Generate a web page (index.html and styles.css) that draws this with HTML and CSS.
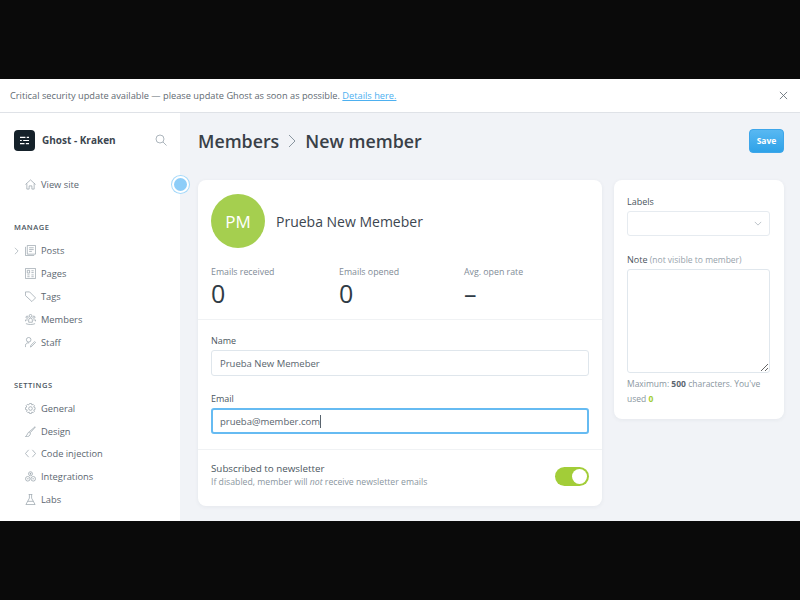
FILE: index.html
```html
<!DOCTYPE html>
<html lang="en">
<head>
    <meta charset="UTF-8">
    <title>New member - Ghost</title>
    <link rel="stylesheet" href="styles.css">
</head>
<body>
    <div class="app">
        <div class="banner">
            <span>Critical security update available — please update Ghost as soon as possible. <a href="#">Details here.</a></span>
            <svg class="close" viewBox="0 0 10 10"><path d="M1 1l8 8M9 1l-8 8"/></svg>
        </div>
        <div class="body">
            <nav class="sidebar">
                <div class="brand">
                    <div class="logo">
                        <svg viewBox="0 0 12 10"><path d="M1 1.500h6M8.500 1.500h2.500M1 5h2M4.500 5h6.500M1 8.500h5M7.500 8.500h3.500"/></svg>
                    </div>
                    <span class="brand-name">Ghost - Kraken</span>
                    <svg class="search" viewBox="0 0 12 12"><circle cx="5" cy="5" r="4"/><path d="M8 8l3.500 3.500"/></svg>
                </div>
                <a class="item view-site" href="#">
                    <svg viewBox="0 0 12 12"><path d="M.5 6L6 1l5.500 5M2 5v6h2.500V7.500h3V11H10V5"/></svg>View site
                </a>
                <div class="pulse"></div>

                <h4>Manage</h4>
                <a class="item" href="#">
                    <svg class="arrow" viewBox="0 0 6 10"><path d="M1 1l4 4-4 4"/></svg>
                    <svg viewBox="0 0 12 12"><path d="M2.500.5h9v9.500h-9zM.5 2v9.500h9.500M4.500 3h5M4.500 5h5M4.500 7h3"/></svg>Posts
                </a>
                <a class="item" href="#">
                    <svg viewBox="0 0 12 12"><path d="M.5.5h11v11H.5zM2.500 2.500h2.500v3H2.500zM7 3h2.500M7 5h2.500M2.500 7.500h2.500M2.500 9.500h2.500M7 7.500h2.500M7 9.500h2.500"/></svg>Pages
                </a>
                <a class="item" href="#">
                    <svg viewBox="0 0 12 12"><path d="M.5 1h4.500l6.500 6.500-4 4L.5 5zM3 3.500h.01"/></svg>Tags
                </a>
                <a class="item" href="#">
                    <svg viewBox="0 0 12 12"><circle cx="6" cy="2" r="1.500"/><circle cx="2.300" cy="3.500" r="1.200"/><circle cx="9.700" cy="3.500" r="1.200"/><path d="M4 6.500a2 2 0 0 1 4 0V9H4zM.5 8V6.500h2.500M11.500 8V6.500H9M1 10.500c3 1.300 7 1.300 10 0"/></svg>Members
                </a>
                <a class="item" href="#">
                    <svg viewBox="0 0 12 12"><circle cx="4" cy="3" r="2.500"/><path d="M.5 11V9a3 3 0 0 1 4-2.500M6 11l.5-2 4-4 1 1-4 4z"/></svg>Staff
                </a>

                <h4 class="settings">Settings</h4>
                <a class="item" href="#">
                    <svg viewBox="0 0 12 12"><circle cx="6" cy="6" r="2"/><path d="M5 .5h2l.4 1.600 1.500-.6 1.400 1.400-.8 1.500 1.500.6v2l-1.500.6.800 1.500-1.400 1.400-1.500-.6L7 11.500H5l-.4-1.600-1.500.6-1.400-1.400.8-1.500L.5 7V5l1.500-.6-.8-1.500 1.400-1.400 1.500.6z"/></svg>General
                </a>
                <a class="item" href="#">
                    <svg viewBox="0 0 12 12"><path d="M11 .8L5 6l1 1L11.300 1.200zM4.500 6.500c-1.800.3-1.500 3.500-4 5 3 .5 5.600-.6 5.300-3.800z"/></svg>Design
                </a>
                <a class="item" href="#">
                    <svg viewBox="0 0 12 12"><path d="M4 2L.5 6 4 10M8 2l3.500 4L8 10"/></svg>Code injection
                </a>
                <a class="item" href="#">
                    <svg viewBox="0 0 12 12"><circle cx="6" cy="3" r="2.200"/><circle cx="3" cy="8.500" r="2.500"/><circle cx="9" cy="8.500" r="2.500"/><path d="M5 3h2M6 2v2M2 8.500h2M8 8.500h2"/></svg>Integrations
                </a>
                <a class="item" href="#">
                    <svg viewBox="0 0 12 12"><path d="M4 .5h4M4.800.5v4L1 11.500h10L7.200 4.500v-4M3 8h6"/></svg>Labs
                </a>
            </nav>

            <main class="content">
                <header class="page-head">
                    <h1>Members <svg class="crumb" viewBox="0 0 8 14"><path d="M1 1l6 6-6 6"/></svg> New member</h1>
                    <button class="save">Save</button>
                </header>
                <div class="columns">
                    <section class="card member">
                        <div class="member-top">
                            <div class="profile">
                                <div class="avatar">PM</div>
                                <div class="member-name">Prueba New Memeber</div>
                            </div>
                            <div class="stats">
                                <div class="stat stat-received"><span>Emails received</span><strong>0</strong></div>
                                <div class="stat stat-opened"><span>Emails opened</span><strong>0</strong></div>
                                <div class="stat"><span>Avg. open rate</span><strong>–</strong></div>
                            </div>
                        </div>
                        <div class="member-form">
                            <label for="name">Name</label>
                            <input id="name" class="field" type="text" value="Prueba New Memeber">
                            <label for="email" class="email-label">Email</label>
                            <div class="field field-focus">prueba@member.com<i class="caret"></i></div>
                        </div>
                        <div class="newsletter">
                            <div>
                                <div class="news-title">Subscribed to newsletter</div>
                                <div class="news-hint">If disabled, member will <em>not</em> receive newsletter emails</div>
                            </div>
                            <div class="toggle"><i></i></div>
                        </div>
                    </section>

                    <aside class="card side">
                        <label>Labels</label>
                        <div class="select">
                            <svg viewBox="0 0 10 6"><path d="M1 1l4 4 4-4"/></svg>
                        </div>
                        <label class="note-label">Note <span>(not visible to member)</span></label>
                        <textarea class="note"></textarea>
                        <p class="count">Maximum: <b>500</b> characters. You've used <b class="used">0</b></p>
                    </aside>
                </div>
            </main>
        </div>
    </div>
</body>
</html>
```

FILE: styles.css
```css
html, body {
    margin: 0;
    height: 100%;
    background-color: #0a0a0a;
}
body {
    padding-top: 79px;
    box-sizing: border-box;
    font-family: "Open Sans", "Noto Sans", sans-serif;
    color: #3c4650;
}
svg {
    fill: none;
    stroke: #8a96a0;
    stroke-width: 0.7;
}
a {
    text-decoration: none;
}

.app {
    height: 442px;
    background-color: #f1f3f7;
    overflow: hidden;
}

.banner {
    height: 33px;
    padding: 0 12px 0 10px;
    background-color: #fff;
    border-bottom: 1px solid #dfe2e7;
    display: flex;
    align-items: center;
    justify-content: space-between;
    font-size: 9.250px;
    color: #5f6a72;
}
.banner a {
    color: #4db0f0;
    text-decoration: underline;
}
.close {
    width: 9px;
    height: 9px;
    stroke: #6a747c;
    stroke-width: 1;
}

.body {
    display: flex;
    height: 408px;
}

.sidebar {
    width: 180px;
    flex-shrink: 0;
    background-color: #fff;
    padding: 16px 0 0 14px;
    box-sizing: border-box;
    position: relative;
}
.brand {
    display: flex;
    align-items: center;
    height: 22px;
    padding-right: 13px;
    margin-bottom: 22px;
}
.logo {
    width: 21px;
    height: 21px;
    border-radius: 4px;
    background-color: #15212a;
    display: flex;
    align-items: center;
    justify-content: center;
    margin-right: 7px;
}
.logo svg {
    width: 11px;
    height: 9px;
    stroke: #fff;
    stroke-width: 1.300;
}
.brand-name {
    flex: 1;
    font-size: 10px;
    font-weight: 700;
    color: #3c4650;
}
.search {
    width: 12px;
    height: 12px;
}

.item {
    position: relative;
    display: flex;
    align-items: center;
    height: 23px;
    padding-left: 11px;
    font-size: 9.300px;
    color: #5b6670;
}
.settings ~ .item {
    height: 22.600px;
}
.item svg {
    width: 11px;
    height: 11px;
    margin-right: 5px;
    flex-shrink: 0;
}
.item .arrow {
    position: absolute;
    left: 0;
    width: 5px;
    height: 8px;
}
.view-site {
    margin-bottom: 25px;
}
.pulse {
    position: absolute;
    left: 172px;
    top: 63px;
    width: 13px;
    height: 13px;
    border-radius: 50%;
    background-color: #8dcdf8;
    border: 2px solid #fff;
    box-shadow: 0 0 0 1px #a5d9fa;
}
.sidebar h4 {
    margin: 0 0 6px;
    font-size: 7.500px;
    font-weight: 600;
    letter-spacing: 0.5px;
    text-transform: uppercase;
    line-height: 12px;
    color: #4b5660;
}
.sidebar .settings {
    margin-top: 25px;
    margin-bottom: 6.500px;
}

.content {
    flex: 1;
    padding: 0 16px 0 18px;
}
.page-head {
    display: flex;
    align-items: center;
    justify-content: space-between;
    height: 55px;
    padding-bottom: 12px;
}
.page-head h1 {
    margin: 0;
    font-size: 17.800px;
    font-weight: 600;
    color: #394047;
    display: flex;
    align-items: center;
    gap: 9px;
}
.crumb {
    width: 8px;
    height: 14px;
    stroke-width: 1;
}
.save {
    width: 35px;
    height: 24px;
    padding: 0;
    border: 1px solid #3ea6ea;
    border-radius: 4px;
    background-color: #3ba9ec;
    background-image: linear-gradient(#58b8f2, #2ea2e8);
    color: #fff;
    font-family: inherit;
    font-size: 8.500px;
    font-weight: 700;
}

.columns {
    display: flex;
    align-items: flex-start;
    gap: 12px;
}
.card {
    background-color: #fff;
    border-radius: 8px;
    box-shadow: 0 1px 4px rgba(40, 50, 70, 0.06);
    box-sizing: border-box;
}
.member {
    width: 404px;
}
.member-top {
    padding: 14px 13px 11px 13px;
    border-bottom: 1px solid #f0f2f4;
}
.profile {
    display: flex;
    align-items: center;
    gap: 11px;
    margin-bottom: 18px;
}
.avatar {
    width: 54px;
    height: 54px;
    border-radius: 50%;
    background-color: #a5cf4f;
    color: #fff;
    font-size: 17px;
    display: flex;
    align-items: center;
    justify-content: center;
}
.member-name {
    font-size: 14px;
    font-weight: 500;
    color: #3c4650;
}
.stats {
    display: flex;
}
.stat {
    display: flex;
    flex-direction: column;
    font-size: 8.800px;
    color: #7f8c97;
}
.stat-received {
    width: 128px;
}
.stat-opened {
    width: 125px;
}
.stat strong {
    font-size: 25px;
    font-weight: 400;
    color: #2f3b45;
    line-height: 30px;
}

.member-form {
    padding: 15px 13px 15px;
    border-bottom: 1px solid #f0f2f4;
}
label {
    display: block;
    font-size: 9px;
    font-weight: 500;
    color: #4b5660;
    line-height: 12px;
    margin-bottom: 3px;
}
.field {
    display: flex;
    align-items: center;
    width: 100%;
    height: 26px;
    padding: 0 8px;
    box-sizing: border-box;
    border: 1px solid #dfe6ec;
    border-radius: 3px;
    font-family: inherit;
    font-size: 9.500px;
    color: #59646e;
    background-color: #fff;
}
.email-label {
    margin-top: 17px;
}
.field-focus {
    border: 2px solid #66bbf2;
    padding: 0 7px;
}
.caret {
    width: 1px;
    height: 13px;
    background-color: #59646e;
}

.newsletter {
    display: flex;
    align-items: center;
    justify-content: space-between;
    padding: 12px 13px 17px;
}
.news-title {
    font-size: 9.800px;
    font-weight: 500;
    color: #4b5660;
    line-height: 14px;
}
.news-hint {
    font-size: 8.700px;
    color: #8a96a0;
    line-height: 13px;
}
.toggle {
    width: 34px;
    height: 19px;
    margin-top: 2px;
    border-radius: 10px;
    background-color: #a2cd38;
    position: relative;
}
.toggle i {
    position: absolute;
    right: 2px;
    top: 2px;
    width: 15px;
    height: 15px;
    border-radius: 50%;
    background-color: #fff;
}

.side {
    width: 170px;
    padding: 16px 14px 13px 13px;
}
.side label {
    margin-bottom: 3px;
}
.select {
    height: 25px;
    border: 1px solid #e6ebf0;
    border-radius: 3px;
    box-sizing: border-box;
    display: flex;
    align-items: center;
    justify-content: flex-end;
    padding-right: 7px;
    margin-bottom: 18px;
}
.select svg {
    width: 8px;
    height: 5px;
}
.note-label span {
    font-size: 8.500px;
    font-weight: 400;
    color: #98a3ac;
}
.note {
    display: block;
    width: 100%;
    height: 104px;
    box-sizing: border-box;
    border: 1px solid #e0e7ed;
    border-radius: 3px;
    margin: 0;
}
.count {
    margin: 3px 0 0;
    font-size: 8.500px;
    line-height: 15px;
    color: #8a96a0;
}
.count b {
    color: #5b6670;
}
.count .used {
    color: #a2cd38;
}
```
